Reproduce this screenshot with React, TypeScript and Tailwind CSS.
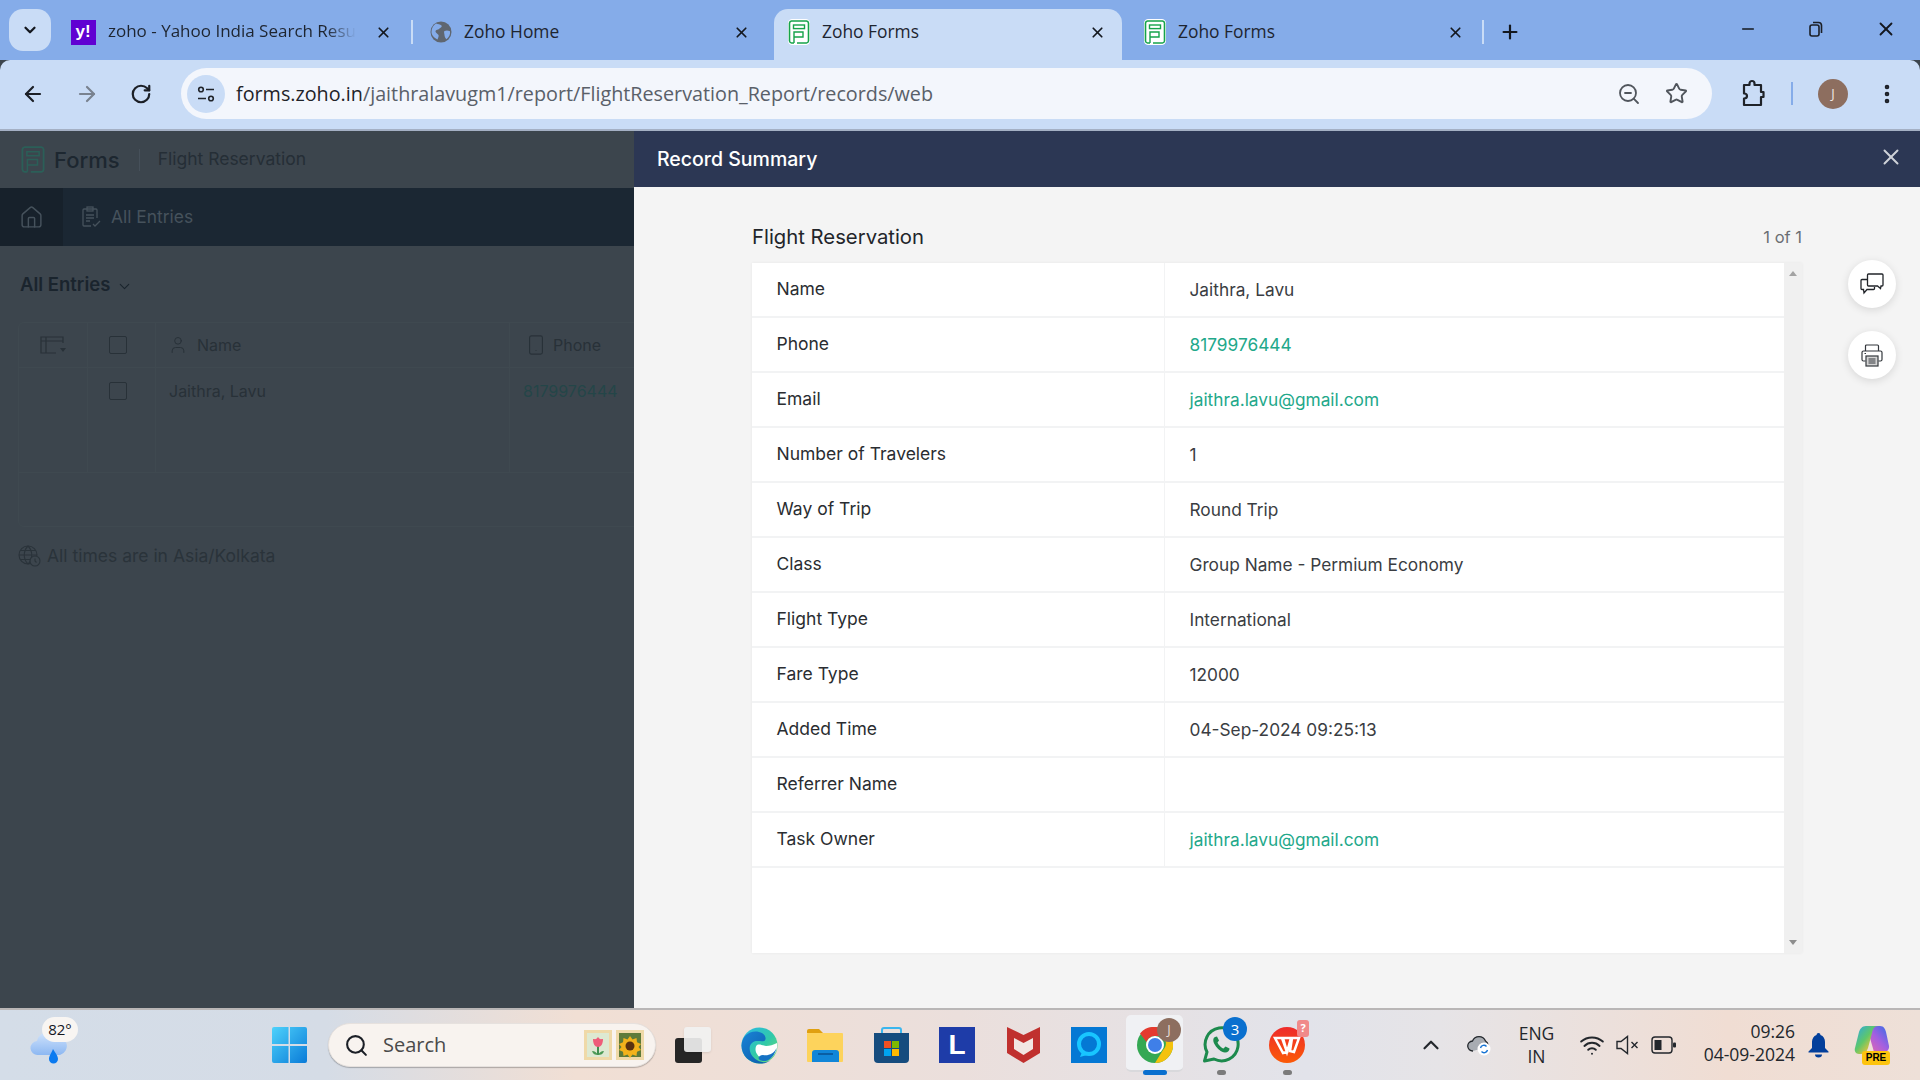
import React from "react";
import { ArrowLeft, ArrowRight, RotateCw, ZoomOut, Star, X, Plus, Minus, ChevronDown, ChevronUp, EllipsisVertical, Wifi, Home, User, Smartphone, Search } from "lucide-react";

const FormsIcon = ({ c = "#16a34a", bg = "#ffffff", w = 22, h = 26 }: { c?: string; bg?: string; w?: number; h?: number }) => (
  <svg width={w} height={h} viewBox="0 0 22 26" fill="none">
    <rect x="0.5" y="0.5" width="21" height="25" rx="3.5" fill={bg} stroke={bg} />
    <path d="M6 24H3.5A2.3 2.3 0 0 1 1.5 22V4A2.3 2.3 0 0 1 3.5 2H18.5A2.3 2.3 0 0 1 20.5 4V22A2.3 2.3 0 0 1 18.5 24H9" stroke={c} strokeWidth="1.6" />
    <rect x="5.5" y="6" width="11" height="3.6" stroke={c} strokeWidth="1.4" />
    <path d="M6 24V13H15V18H6" stroke={c} strokeWidth="1.4" />
  </svg>
);

const Globe2 = () => (
  <svg width="22" height="22" viewBox="0 0 22 22">
    <circle cx="11" cy="11" r="10.5" fill="#5f6670" />
    <path d="M6 2.5c2 1 4 .5 5.5 2 1 1.5-1.5 2.5-2.5 3.5-1 1-3 .5-3.5 2-.5 1.5 2 2.5 3 4 .5 1-.3 3-1 4.5C4 17 1.5 14 1.5 11 1.5 7 3.5 4 6 2.5z" fill="#85ace9" />
    <path d="M14.5 10c1.500-.8 3.500-.8 5.500.2.500 3-1 6-3.500 8-1-1-2-2.500-2-4 0-1.500-1-3.200 0-4.200z" fill="#85ace9" />
  </svg>
);

const Restore = () => (
  <svg width="18" height="18" viewBox="0 0 18 18" fill="none" stroke="#1b1f26" strokeWidth="1.6">
    <rect x="3" y="5" width="9" height="11" rx="2" />
    <path d="M6 2.500h5.500a3 3 0 0 1 3 3V13" />
  </svg>
);

const Sliders = () => (
  <svg width="20" height="20" viewBox="0 0 20 20" fill="none" stroke="#1f2329" strokeWidth="1.6">
    <circle cx="5" cy="5.500" r="2.300" />
    <path d="M10 5.500h8M2 14.500h8" />
    <circle cx="15" cy="14.500" r="2.300" />
  </svg>
);

const Puzzle2 = () => (
  <svg width="26" height="30" viewBox="0 0 26 30" fill="none" stroke="#1f2329" strokeWidth="2.200" strokeLinejoin="round">
    <path d="M4 6h5.500V4.500a2.500 2.500 0 0 1 5 0V6H21v7h2.500v5H21v8H4v-6.500c2 0 3-1 3-2.500s-1-2.500-3-2.500z" />
  </svg>
);

const Chat = () => (
  <svg width="24" height="22" viewBox="0 0 24 22" fill="none" stroke="#22252a" strokeWidth="1.300">
    <path d="M7.500 6.500H2a1 1 0 0 0-1 1v8a1 1 0 0 0 1 1h1.500l.5 3.500 3-3.500h6.500a1 1 0 0 0 1-1V14" />
    <path d="M8.500 1h13.500a1 1 0 0 1 1 1v10a1 1 0 0 1-1 1h-1l-.5 2.500-3-2.500H8.500a1 1 0 0 1-1-1V2a1 1 0 0 1 1-1z" fill="#fff" />
  </svg>
);

const PrinterIcon = () => (
  <svg width="22" height="23" viewBox="0 0 22 23" fill="none" stroke="#33373c" strokeWidth="1.200">
    <path d="M4.500 7V2a1 1 0 0 1 1-1h11a1 1 0 0 1 1 1v5" />
    <path d="M4.500 17H2.500a1.500 1.500 0 0 1-1.500-1.500V8.500A1.500 1.500 0 0 1 2.500 7h17a1.500 1.500 0 0 1 1.500 1.500v7a1.500 1.500 0 0 1-1.500 1.500h-2" />
    <rect x="5" y="12" width="12" height="10" fill="#d4d4d4" />
    <path d="M7.500 15h7M7.500 17h7M7.500 19h7M3.500 9.500h1.500" />
  </svg>
);

const Weather = () => (
  <svg width="37" height="36" viewBox="0 0 37 36">
    <defs>
      <linearGradient id="cl" x1="0" y1="0" x2="0" y2="1">
        <stop offset="0" stopColor="#cfe2fb" />
        <stop offset="1" stopColor="#8db8f2" />
      </linearGradient>
    </defs>
    <path d="M8 26a7 7 0 0 1-1-14 10 10 0 0 1 18-4 9 9 0 0 1 5 18z" fill="url(#cl)" />
    <path d="M23 20c3 5 5 7 5 10a4.500 4.500 0 0 1-9 0c0-3 2-5 4-10z" fill="#0a7af0" />
  </svg>
);

const WinLogo = () => (
  <svg width="35" height="36" viewBox="0 0 35 36">
    <defs>
      <linearGradient id="w1" x1="0" y1="0" x2="1" y2="1">
        <stop offset="0" stopColor="#4ed2fb" />
        <stop offset="1" stopColor="#0a7bd8" />
      </linearGradient>
    </defs>
    <path d="M0 2a2 2 0 0 1 2-2h14.500v17H0zM18 0h15a2 2 0 0 1 2 2v15H18zM0 19h16.500v17H2a2 2 0 0 1-2-2zM18 19h17v15a2 2 0 0 1-2 2H18z" fill="url(#w1)" />
  </svg>
);

const Stamp = ({ bg, kind }: { bg: string; kind: "tulip" | "sun" }) => (
  <svg width="28" height="30" viewBox="0 0 28 30">
    <rect width="28" height="30" fill="#efd9a8" />
    <rect x="3" y="3" width="22" height="24" fill={bg} />
    {kind === "tulip" ? (
      <g>
        <path d="M14 25V15" stroke="#3f8f4f" strokeWidth="2" />
        <path d="M8 21c3 0 5 2 6 4-3 0-5-1-6-4zM20 21c-3 0-5 2-6 4 3 0 5-1 6-4z" fill="#4d9a56" />
        <path d="M9 9c2 0 3 1 5-2 2 3 3 2 5 2 0 5-2 8-5 8s-5-3-5-8z" fill="#ee5d79" />
      </g>
    ) : (
      <g>
        <path d="M14 6l2.500 3.500 4-1.500.5 4.200 4 1.800-2.500 3 2.500 3-4 1.800-.5 4.200-4-1.500-2.500 3.500-2.500-3.500-4 1.500-.5-4.200-4-1.800 2.500-3-2.500-3 4-1.800.5-4.200 4 1.500z" fill="#f2b21b" />
        <circle cx="14" cy="16" r="4.500" fill="#5a3210" />
      </g>
    )}
  </svg>
);

const TaskView = () => (
  <div className="relative w-[36px] h-[36px]">
    <div className="absolute left-0 bottom-0 w-[27px] h-[25px] rounded-[3px] bg-[#262626]" />
    <div className="absolute right-[0px] top-0 w-[27px] h-[25px] rounded-[3px] bg-[#f2f2f2] opacity-90 shadow-sm" />
  </div>
);

const Edge = () => (
  <svg width="37" height="37" viewBox="0 0 37 37">
    <defs>
      <linearGradient id="e1" x1="0" y1="0" x2="1" y2="1">
        <stop offset="0" stopColor="#2bb9e8" />
        <stop offset="0.55" stopColor="#31c9a8" />
        <stop offset="1" stopColor="#7be06a" />
      </linearGradient>
      <linearGradient id="e2" x1="0" y1="0" x2="1" y2="1">
        <stop offset="0" stopColor="#1a83d6" />
        <stop offset="1" stopColor="#0b5aa8" />
      </linearGradient>
    </defs>
    <circle cx="18.500" cy="18.500" r="18" fill="url(#e1)" />
    <path d="M.5 18.500C1 9 9 3 18 5c7 1.500 8 8 5 9-4 1-9-2-13 3-3 4-1 12 6 16 5 3 11 3 15-1-4 4-9 5-13 4.500C8 36 .5 28 .5 18.500z" fill="url(#e2)" />
    <path d="M16 18c3-1.500 6 1 9 1 4 0 7-1 11-3 1 6-2 12-6 15-6 2-12 0-14-4-2-3-2-7 0-9z" fill="#fff" />
    <path d="M22 28c5 1 11-1 13.500-7-1.500 7-6 12-11 13-3 .5-7-1-7-3 0-1.500 2-3 4.500-3z" fill="#1572c4" />
  </svg>
);

const Folder = () => (
  <svg width="36" height="34" viewBox="0 0 36 34">
    <path d="M0 3a2 2 0 0 1 2-2h10l4 4H0z" fill="#e0a010" />
    <rect y="5" width="36" height="29" rx="1" fill="#fdd35c" />
    <path d="M5 34v-9a3 3 0 0 1 3-3h21a3 3 0 0 1 3 3v9z" fill="#1186d8" />
    <rect x="11" y="25" width="15" height="2" fill="#0a5ea3" />
  </svg>
);

const Store = () => (
  <svg width="35" height="36" viewBox="0 0 35 36">
    <path d="M8 8V3a2 2 0 0 1 2-2h15a2 2 0 0 1 2 2v5" fill="none" stroke="#3bb6ee" strokeWidth="2" />
    <path d="M0 6h35v26a4 4 0 0 1-4 4H4a4 4 0 0 1-4-4z" fill="#164c7e" />
    <rect x="10" y="14" width="7" height="7" fill="#f25022" />
    <rect x="18" y="14" width="7" height="7" fill="#7fba00" />
    <rect x="10" y="22" width="7" height="7" fill="#00a4ef" />
    <rect x="18" y="22" width="7" height="7" fill="#ffb900" />
  </svg>
);

const McAfee = () => (
  <svg width="33" height="36" viewBox="0 0 33 36">
    <path d="M0 0l16.500 8L33 0v26L16.500 36 0 26z" fill="#c0302e" />
    <path d="M7 11l9.500 5 9.500-5v11l-9.500 6-9.500-6z" fill="#f2e6e2" />
  </svg>
);

const Alexa = () => (
  <div className="w-[36px] h-[36px] bg-[#0478d4] flex items-center justify-center">
    <svg width="28" height="28" viewBox="0 0 28 28" fill="none">
      <circle cx="14" cy="13" r="10" stroke="#18c6ff" strokeWidth="4" />
      <path d="M7 21l-2 5 7-2" fill="#18c6ff" />
    </svg>
  </div>
);

const Chrome2 = () => (
  <svg width="36" height="36" viewBox="0 0 36 36">
    <circle cx="18" cy="18" r="18" fill="#34a853" />
    <path d="M18 0a18 18 0 0 1 15.600 9H18a9 9 0 0 0-8.500 6L3 6.500A18 18 0 0 1 18 0z" fill="#e53a2f" />
    <path d="M33.600 9A18 18 0 0 1 18 36l8-13a9 9 0 0 0-1-14z" fill="#f4c20d" />
    <circle cx="18" cy="18" r="9" fill="#fff" />
    <circle cx="18" cy="18" r="7" fill="#3f7fe8" />
  </svg>
);

const Whatsapp = () => (
  <svg width="38" height="38" viewBox="0 0 38 38" fill="none">
    <path d="M2.500 35l2.500-9A16.500 16.500 0 1 1 12 33z" stroke="#1d8a4d" strokeWidth="3" strokeLinejoin="round" />
    <path d="M13 11c-2 1-2.500 4 0 8s6 7 10 7.500c3 0 4.500-2 4.500-4l-4-2-2 2c-2-.5-5-3.500-6-6l1.500-2-2-4z" fill="#1d8a4d" />
  </svg>
);

const Wps = () => (
  <svg width="36" height="36" viewBox="0 0 36 36">
    <defs>
      <linearGradient id="wp" x1="0" y1="0" x2="0" y2="1">
        <stop offset="0" stopColor="#ee2b2b" />
        <stop offset="1" stopColor="#fb5a07" />
      </linearGradient>
    </defs>
    <circle cx="18" cy="18" r="18" fill="url(#wp)" />
    <path d="M6 11h7l5 14-4 1zM14 11h8l-4 14zM23 11h7l-5 14-4-1z" fill="none" stroke="#fff" strokeWidth="2.500" />
  </svg>
);

const SyncCloud = () => (
  <svg width="25" height="24" viewBox="0 0 25 24">
    <path d="M6 18a5 5 0 0 1-.5-10 7 7 0 0 1 13 0 5 5 0 0 1 2 6" fill="#a8acb2" stroke="#23272c" strokeWidth="1.300" />
    <circle cx="17" cy="16" r="6.500" fill="#fff" />
    <path d="M13.500 15a3.500 3.500 0 0 1 6-1.500M20.500 17a3.500 3.500 0 0 1-6 1.500" stroke="#1673d4" strokeWidth="1.400" fill="none" />
  </svg>
);

const Mute = () => (
  <svg width="24" height="20" viewBox="0 0 24 20" fill="none" stroke="#23272c" strokeWidth="1.400">
    <path d="M1 6.500h4L11.500 1.500v17L5 13.500H1z" />
    <path d="M15.500 7l6 6M21.500 7l-6 6" />
  </svg>
);

const Battery = () => (
  <svg width="25" height="18" viewBox="0 0 25 18" fill="none">
    <rect x="1" y="1" width="20" height="16" rx="3" stroke="#23272c" strokeWidth="1.400" />
    <rect x="3.500" y="4" width="7" height="10" fill="#23272c" />
    <rect x="22" y="6.500" width="3" height="5" rx="1" fill="#23272c" />
  </svg>
);

const Bell = () => (
  <svg width="21" height="25" viewBox="0 0 21 25">
    <path d="M10.500 0a2 2 0 0 1 2 2c3 1 4.500 4 4.500 7v6l3.500 3.500v1H.5v-1L4 15V9c0-3 1.500-6 4.500-7a2 2 0 0 1 2-2z" fill="#033f9b" />
    <path d="M7 21.500h7a3.500 3 0 0 1-7 0z" fill="#033f9b" />
  </svg>
);

const Copilot = () => (
  <div className="relative w-[36px] h-[40px]">
    <svg width="36" height="32" viewBox="0 0 36 32">
      <defs>
        <linearGradient id="cp" x1="0" y1="0" x2="1" y2="1">
          <stop offset="0" stopColor="#2aa7e8" />
          <stop offset="0.45" stopColor="#5fc76a" />
          <stop offset="0.75" stopColor="#e8c23a" />
          <stop offset="1" stopColor="#e0539c" />
        </linearGradient>
        <linearGradient id="cp2" x1="1" y1="0" x2="0" y2="1">
          <stop offset="0" stopColor="#2f6fe8" />
          <stop offset="0.5" stopColor="#a45fe0" />
          <stop offset="1" stopColor="#ea6aa8" />
        </linearGradient>
      </defs>
      <path d="M13 1h13c4 0 5 3 6 6l3 14c.5 3-2 6-5 6H20l-4-14z" fill="url(#cp2)" />
      <path d="M12 1h12c-4 0-5 3-6 7l-4 15c-1 3-3 6-7 6H5c-3 0-5-3-4-6l4-16c1-3 3-6 7-6z" fill="url(#cp)" />
    </svg>
    <span className="absolute left-[8px] bottom-0 h-[14px] w-[28px] rounded-[3px] bg-[#fdc30e] text-[10px] leading-[14px] font-bold text-center text-black font-['Liberation_Sans',sans-serif]">PRE</span>
  </div>
);

const Tab = ({ icon, title, cls, iconMl, titleMl, titleCls, closeMr }: { icon: React.ReactNode; title: string; cls: string; iconMl: string; titleMl: string; titleCls?: string; closeMr: string }) => (
  <div className={`${cls} h-[51px] pb-[5px] flex items-center shrink-0`}>
    <div className={`w-[26px] flex justify-center shrink-0 ${iconMl}`}>{icon}</div>
    <span className={`text-[#1e2530] whitespace-nowrap -translate-y-[1px] ${titleMl} ${titleCls ?? "text-[17.400px]"}`}>{title}</span>
    <X className={`ml-auto shrink-0 text-[#14181f] ${closeMr}`} size={17} strokeWidth={2.400} />
  </div>
);

const Sep = () => <div className="w-[2px] h-[24px] mb-[5px] bg-[#c9dcf6] shrink-0" />;

const rows: [string, string, boolean?][] = [
  ["Name", "Jaithra, Lavu"],
  ["Phone", "8179976444", true],
  ["Email", "jaithra.lavu@gmail.com", true],
  ["Number of Travelers", "1"],
  ["Way of Trip", "Round Trip"],
  ["Class", "Group Name - Permium Economy"],
  ["Flight Type", "International"],
  ["Fare Type", "12000"],
  ["Added Time", "04-Sep-2024 09:25:13"],
  ["Referrer Name", ""],
  ["Task Owner", "jaithra.lavu@gmail.com", true],
];

const Slot = ({ children }: { children?: React.ReactNode }) => (
  <div className="relative w-[66px] h-[72px] flex items-center justify-center shrink-0">{children}</div>
);

export default function App() {
  return (
    <div className="w-[1920px] h-[1080px] flex flex-col overflow-hidden font-['Inter',sans-serif] bg-[#3c454d]">
      {/* Tab strip */}
      <div className="h-[60px] bg-[#85ace9] flex items-end shrink-0 font-['Open_Sans',sans-serif]">
        <div className="ml-[9px] mb-[9px] w-[42px] h-[42px] rounded-[14px] bg-[#c9dcf6] flex items-center justify-center shrink-0">
          <ChevronDown size={18} strokeWidth={3} className="text-[#14181f]" />
        </div>
        <div className="flex items-center h-[51px] ml-[7px]">
          <Tab
            cls="w-[353px]"
            iconMl="ml-[12px]"
            titleMl="ml-[12px]"
            closeMr="mr-[19px]"
            titleCls="text-[17px] [mask-image:linear-gradient(to_right,black_88%,transparent)]"
            title="zoho - Yahoo India Search Resu"
            icon={<div className="w-[25px] h-[25px] bg-[#6001d2] text-white text-[17px] font-bold leading-[24px] text-center font-['Liberation_Sans',sans-serif]">y!</div>}
          />
          <Sep />
          <Tab cls="w-[361px]" iconMl="ml-[15px]" titleMl="ml-[10px]" closeMr="mr-[24px]" title="Zoho Home" icon={<Globe2 />} />
        </div>
        <Tab cls="w-[348px] bg-[#c9dcf6] rounded-t-[14px]" iconMl="ml-[12px]" titleMl="ml-[10px]" closeMr="mr-[16px]" title="Zoho Forms" icon={<FormsIcon />} />
        <div className="flex items-center h-[51px]">
          <Tab cls="w-[360px]" iconMl="ml-[20px]" titleMl="ml-[10px]" closeMr="mr-[18px]" title="Zoho Forms" icon={<FormsIcon />} />
          <Sep />
          <Plus size={22} strokeWidth={2.400} className="ml-[15px] mb-[6px] text-[#14181f]" />
        </div>
        <div className="ml-auto flex items-center h-[51px] -translate-y-[6px]">
          <Minus size={18} strokeWidth={2.200} className="text-[#14181f] mr-[50px]" />
          <div className="mr-[50px]"><Restore /></div>
          <X size={22} strokeWidth={2} className="text-[#14181f] mr-[23px]" />
        </div>
      </div>

      {/* Toolbar */}
      <div className="h-[71px] bg-[#c9dcf6] rounded-t-[10px] border-b-2 border-[#a4b0c4] flex items-center shrink-0 pb-[2px] font-['Open_Sans',sans-serif]">
        <ArrowLeft size={24} strokeWidth={2.200} className="ml-[21px] text-[#1b1f26]" />
        <ArrowRight size={24} strokeWidth={2.200} className="ml-[30px] text-[#79828f]" />
        <RotateCw size={22} strokeWidth={2.400} className="ml-[31px] text-[#1b1f26]" />
        <div className="ml-[29px] w-[1531px] h-[51px] rounded-full bg-[#f3f6fc] flex items-center">
          <div className="ml-[6px] w-[38px] h-[38px] rounded-full bg-[#c9dcf6] flex items-center justify-center shrink-0">
            <Sliders />
          </div>
          <span className="ml-[11px] text-[19.750px] text-[#1f2329] whitespace-nowrap">
            forms.zoho.in<span className="text-[#5a6069]">/jaithralavugm1/report/FlightReservation_Report/records/web</span>
          </span>
          <ZoomOut size={24} strokeWidth={1.800} className="ml-auto mr-[24px] text-[#50555c]" />
          <Star size={23} strokeWidth={2} className="mr-[24px] text-[#50555c]" />
        </div>
        <div className="ml-[28px]"><Puzzle2 /></div>
        <div className="ml-[25px] w-[2px] h-[23px] bg-[#85ace9]" />
        <div className="ml-[25px] w-[30px] h-[30px] rounded-full bg-[#8d6e5f] text-[#f0e8e4] text-[13px] flex items-center justify-center">J</div>
        <EllipsisVertical size={24} strokeWidth={2.600} className="ml-[27px] text-[#1b1f26]" />
      </div>

      {/* Page */}
      <div className="flex-1 flex min-h-0">
        {/* Dimmed left */}
        <div className="w-[634px] shrink-0 flex flex-col overflow-hidden bg-[#3c454d]">
          <div className="h-[57px] flex items-center shrink-0">
            <div className="ml-[20px]"><FormsIcon c="#2b5f58" bg="transparent" w={26} h={29} /></div>
            <span className="ml-[8px] text-[22px] text-[#1d2730] font-medium leading-none">Forms</span>
            <div className="ml-[19px] w-px h-[22px] bg-[#46505a]" />
            <span className="ml-[18px] text-[17.500px] text-[#252e36]">Flight Reservation</span>
          </div>
          <div className="h-[58px] bg-[#1b2733] flex items-center shrink-0">
            <div className="w-[63px] h-full bg-[#17212b] flex items-center justify-center">
              <Home size={25} strokeWidth={1.400} className="text-[#46525c]" />
            </div>
            <svg className="ml-[19px]" width="19" height="22" viewBox="0 0 19 22" fill="none" stroke="#46525c" strokeWidth="1.300">
              <path d="M9 20H2a1 1 0 0 1-1-1V4a1 1 0 0 1 1-1h12a1 1 0 0 1 1 1v8" />
              <rect x="5" y="1" width="6" height="4" />
              <path d="M4 9h8M4 12h8M4 15h4M11 18l2 2 5-5" />
            </svg>
            <span className="ml-[10px] text-[17.400px] text-[#46525c]">All Entries</span>
          </div>
          <div className="flex items-center mt-[28px] ml-[20px] h-[22px]">
            <span className="text-[18.500px] font-semibold text-[#1a242d]">All Entries</span>
            <ChevronDown size={17} strokeWidth={1.500} className="ml-[6px] mt-[2px] text-[#1a242d]" />
          </div>
          <div className="ml-[18px] mt-[26px] w-[640px] h-[205px] border border-[#3f4950] rounded-l-[6px] shrink-0">
            <div className="h-[45px] flex border-b border-[#3f4950]">
              <div className="w-[69px] border-r border-[#3f4950] flex items-center justify-center">
                <svg width="26" height="18" viewBox="0 0 26 18" fill="none" stroke="#283138" strokeWidth="1.200">
                  <path d="M23 7V1H1v16h15M1 5h22M6 1v16" />
                  <path d="M20 12h6l-3 4z" fill="#283138" stroke="none" />
                </svg>
              </div>
              <div className="w-[68px] border-r border-[#3f4950] flex items-center pl-[21px]">
                <div className="w-[18px] h-[18px] border border-[#283138] rounded-[2px]" />
              </div>
              <div className="w-[354px] border-r border-[#3f4950] flex items-center pl-[12px]">
                <User size={20} strokeWidth={1.200} className="text-[#283138]" />
                <span className="ml-[9px] text-[16px] text-[#283138]">Name</span>
              </div>
              <div className="flex-1 flex items-center pl-[15px]">
                <Smartphone size={22} strokeWidth={1.200} className="text-[#283138]" />
                <span className="ml-[6px] text-[16px] text-[#283138]">Phone</span>
              </div>
            </div>
            <div className="h-[105px] flex border-b border-[#3f4950]">
              <div className="w-[69px] border-r border-[#3f4950]" />
              <div className="w-[68px] border-r border-[#3f4950] pl-[21px] pt-[14px]">
                <div className="w-[18px] h-[18px] border border-[#283138] rounded-[2px]" />
              </div>
              <div className="w-[354px] border-r border-[#3f4950] pl-[13px] pt-[12px] text-[16px] leading-[22px] text-[#283138]">Jaithra, Lavu</div>
              <div className="flex-1 pl-[13px] pt-[12px] text-[16px] leading-[22px] text-[#244548]">8179976444</div>
            </div>
          </div>
          <div className="ml-[18px] mt-[18px] flex items-center h-[22px]">
            <svg width="23" height="22" viewBox="0 0 23 22" fill="none" stroke="#2a333a" strokeWidth="1.100">
              <circle cx="10" cy="10" r="9" />
              <path d="M1 10h18M2 5.500h16M2 14.500h16M10 1c-5 5-5 13 0 18M10 1c5 5 5 13 0 18" />
              <circle cx="17" cy="16" r="5" fill="#3c454d" />
              <path d="M17 13.500V16l1.500 1.500" />
            </svg>
            <span className="ml-[6px] text-[17.500px] text-[#2a333a]">All times are in Asia/Kolkata</span>
          </div>
        </div>

        {/* Right panel */}
        <div className="flex-1 flex flex-col bg-[#f4f4f4] min-w-0">
          <div className="h-[56px] bg-[#2c3754] flex items-center shrink-0 pt-[1px]">
            <span className="ml-[23px] text-[19.500px] font-medium text-white">Record Summary</span>
            <X size={26} strokeWidth={1.800} className="ml-auto mr-[16px] text-[#cfd2d8] -translate-y-[3px]" />
          </div>
          <div className="flex-1 flex pl-[118px] min-h-0">
            <div className="w-[1050px] shrink-0">
              <div className="h-[76px] flex items-center justify-between pt-[24px]">
                <span className="text-[20.300px] text-[#22252a]">Flight Reservation</span>
                <span className="text-[16.500px] text-[#6b6e73]">1 of 1</span>
              </div>
              <div className="h-[690px] flex bg-[#f0f0f0] shadow-[0_0_3px_rgba(0,0,0,0.06)]">
                <div className="w-[1032px] bg-white shrink-0">
                  {rows.map(([k, v, link]) => (
                    <div key={k} className="h-[55px] flex items-center border-b-2 border-[#f2f3f4]">
                      <div className="w-[413px] h-full border-r border-[#f2f3f4] pl-[24.500px] flex items-center text-[17.500px] text-[#2a2d31]">{k}</div>
                      <div className={`pl-[24.500px] text-[17.300px] ${link ? "text-[#22a88a]" : "text-[#3a3d42]"}`}>{v}</div>
                    </div>
                  ))}
                </div>
                <div className="flex-1 flex flex-col items-center justify-between py-[8px]">
                  <div className="w-0 h-0 border-x-[4px] border-x-transparent border-b-[5px] border-b-[#a3a3a3]" />
                  <div className="w-0 h-0 border-x-[4px] border-x-transparent border-t-[5px] border-t-[#8d8d8d]" />
                </div>
              </div>
            </div>
            <div className="ml-[46px] mt-[73px] flex flex-col gap-[23px]">
              <div className="w-[48px] h-[48px] rounded-full bg-white shadow-[0_2px_8px_rgba(0,0,0,0.12)] flex items-center justify-center"><Chat /></div>
              <div className="w-[48px] h-[48px] rounded-full bg-white shadow-[0_2px_8px_rgba(0,0,0,0.12)] flex items-center justify-center"><PrinterIcon /></div>
            </div>
          </div>
        </div>
      </div>

      {/* Taskbar */}
      <div className="h-[72px] shrink-0 border-t-2 border-[#b9b6b6] flex items-center bg-[linear-gradient(90deg,#d4dde8_0%,#d5dce6_17%,#f1dfd4_30%,#ebdfdc_50%,#e2e3ea_68%,#e6e4e7_75%,#f0ddd3_90%,#eee0d8_100%)] font-['Open_Sans',sans-serif]">
        <div className="relative ml-[30px] w-[37px] h-[36px] mt-[4px]">
          <Weather />
          <div className="absolute left-[12px] -top-[12px] w-[36px] h-[25px] rounded-full bg-[#f8f5f2] text-[15px] text-[#14181f] flex items-center justify-center">82°</div>
        </div>
        <div className="ml-[205px]"><WinLogo /></div>
        <div className="ml-[21px] w-[328px] h-[44px] rounded-full bg-[#f8f3ef] shadow-[0_1px_1px_rgba(0,0,0,0.25)] border border-[#e6e1de] flex items-center">
          <Search size={25} strokeWidth={2} className="ml-[15px] text-[#1b1f26]" />
          <span className="ml-[14px] text-[20px] text-[#4a4a4a]">Search</span>
          <div className="ml-auto mr-[11px] flex gap-[4px]">
            <Stamp bg="#dde9d2" kind="tulip" />
            <Stamp bg="#5d7a3a" kind="sun" />
          </div>
        </div>
        <div className="ml-[4px] flex">
          <Slot><TaskView /></Slot>
          <Slot><Edge /></Slot>
          <Slot><Folder /></Slot>
          <Slot><Store /></Slot>
          <Slot>
            <div className="w-[36px] h-[36px] bg-[#1e3ca8] text-white text-[28px] font-bold leading-[36px] text-center font-['Liberation_Sans',sans-serif]">L</div>
          </Slot>
          <Slot><McAfee /></Slot>
          <Slot><Alexa /></Slot>
          <Slot>
            <div className="absolute left-[4px] top-[6px] w-[57px] h-[57px] rounded-[5px] bg-[#f0f1f4] border-b-2 border-[#d9d9dc]" />
            <div className="relative"><Chrome2 /></div>
            <div className="absolute left-[35px] top-[9px] w-[24px] h-[24px] rounded-full bg-[#8d6e5f] text-[#e9dfd9] text-[13px] flex items-center justify-center">J</div>
            <div className="absolute left-[21px] bottom-[6px] w-[24px] h-[5px] rounded-full bg-[#0a70cf]" />
          </Slot>
          <Slot>
            <Whatsapp />
            <div className="absolute left-[35px] top-[8px] w-[24px] h-[24px] rounded-full bg-[#0a70cf] text-white text-[15px] flex items-center justify-center">3</div>
            <div className="absolute left-[29px] bottom-[6px] w-[9px] h-[5px] rounded-full bg-[#7b7b7b]" />
          </Slot>
          <Slot>
            <Wps />
            <div className="absolute left-[43px] top-[11px] w-[12px] h-[17px] rounded-[3px] bg-[#f08a8a] text-white text-[11px] leading-[16px] text-center font-bold">?</div>
            <div className="absolute left-[29px] bottom-[6px] w-[9px] h-[5px] rounded-full bg-[#7b7b7b]" />
          </Slot>
        </div>
        <ChevronUp size={26} strokeWidth={2} className="ml-[98px] text-[#23272c]" />
        <div className="ml-[23px]"><SyncCloud /></div>
        <div className="ml-[26px] w-[37px] flex flex-col items-center text-[17.500px] leading-[23px] text-[#23272c]">
          <span>ENG</span>
          <span>IN</span>
        </div>
        <Wifi size={26} strokeWidth={1.800} className="ml-[24px] text-[#23272c]" />
        <div className="ml-[11px]"><Mute /></div>
        <div className="ml-[11px]"><Battery /></div>
        <div className="ml-[21px] w-[98px] flex flex-col items-end text-[17.500px] leading-[23px] text-[#23272c] -translate-y-[2px]">
          <span>09:26</span>
          <span className="whitespace-nowrap">04-09-2024</span>
        </div>
        <div className="ml-[13px]"><Bell /></div>
        <div className="ml-[25px]"><Copilot /></div>
      </div>
    </div>
  );
}
